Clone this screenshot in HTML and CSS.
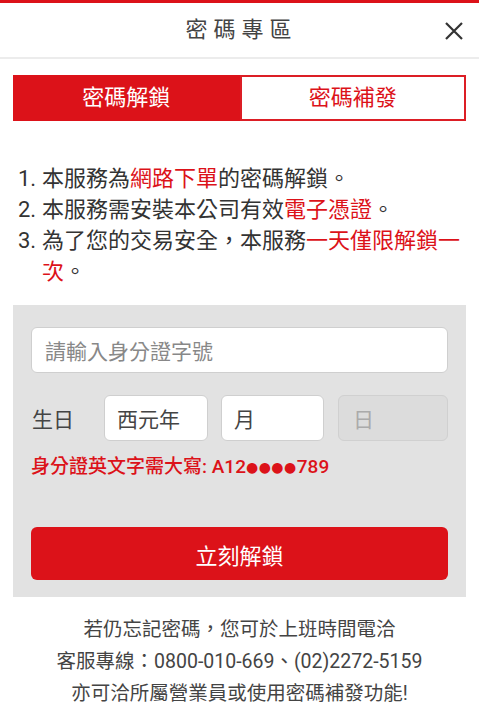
FILE: index.html
```html
<!DOCTYPE html>
<html lang="zh-Hant">
<head>
<meta charset="utf-8">
<link rel="stylesheet" href="styles.css">
</head>
<body>
<div class="topbar"></div>
<header class="header">
  <h1 class="title">密碼專區</h1>
  <button class="close" aria-label="close">
    <svg width="18" height="18" viewBox="0 0 18 18"><path d="M1 1 L17 17 M17 1 L1 17" stroke="#333" stroke-width="2.2" fill="none"/></svg>
  </button>
</header>
<main class="content">
  <div class="tabs">
    <div class="tab active">密碼解鎖</div>
    <div class="tab">密碼補發</div>
  </div>
  <ol class="notes">
    <li><span class="num">1.</span><span class="txt">本服務為<em>網路下單</em>的密碼解鎖。</span></li>
    <li><span class="num">2.</span><span class="txt">本服務需安裝本公司有效<em>電子憑證</em>。</span></li>
    <li><span class="num">3.</span><span class="txt">為了您的交易安全，本服務<em>一天僅限解鎖一次</em>。</span></li>
  </ol>
  <section class="panel">
    <div class="field">請輸入身分證字號</div>
    <div class="birth">
      <span class="label">生日</span>
      <div class="box year">西元年</div>
      <div class="box month">月</div>
      <div class="box day disabled">日</div>
    </div>
    <p class="hint">身分證英文字需大寫: A12<span class="dots">●●●●</span>789</p>
    <button class="submit">立刻解鎖</button>
  </section>
  <footer class="footer">
    <p>若仍忘記密碼，您可於上班時間電洽</p>
    <p>客服專線：0800-010-669、(02)2272-5159</p>
    <p>亦可洽所屬營業員或使用密碼補發功能!</p>
  </footer>
</main>
</body>
</html>
```
FILE: styles.css
```css
* { box-sizing: border-box; }
html, body { margin: 0; padding: 0; background: #fff; }
body {
  width: 479px;
  font-family: Roboto, "Noto Sans CJK TC", "Noto Sans", sans-serif;
  color: #333;
}
.topbar { height: 3px; background: #dc1219; }
.header {
  position: relative;
  height: 56px;
  display: flex;
  align-items: center;
  justify-content: center;
  border-bottom: 2px solid #ececec;
}
.title {
  margin: 0;
  font-size: 22px;
  font-weight: 400;
  letter-spacing: 6px;
  padding-left: 4px;
  color: #444;
  line-height: 1;
}
.close {
  position: absolute;
  right: 16px;
  top: 19px;
  width: 18px;
  height: 18px;
  padding: 0;
  border: 0;
  background: none;
  display: flex;
}
.content { padding: 16px 13px 0; }
.tabs {
  display: flex;
  height: 46px;
}
.tab {
  flex: 1;
  display: flex;
  align-items: center;
  justify-content: center;
  font-size: 22px;
  color: #dc1219;
  border: 2px solid #dc1e25;
  background: #fff;
  line-height: 1;
}
.tab.active { background: #dc1219; color: #fff; border-color: #dc1219; }
.notes {
  list-style: none;
  margin: 42px 0 0;
  padding: 0 0 0 5px;
  font-size: 22px;
  line-height: 31px;
  color: #333;
}
.notes li { display: flex; }
.num { width: 24px; flex: none; }
.txt { flex: 1; }
.notes em { font-style: normal; color: #dc1219; }
.panel {
  margin-top: 18px;
  background: #e2e2e2;
  padding: 22px 18px 17px;
}
.field {
  height: 46px;
  background: #fff;
  border: 1.5px solid #cfcfcf;
  border-radius: 6px;
  display: flex;
  align-items: center;
  padding-left: 13px;
  font-size: 21px;
  color: #888;
}
.birth {
  margin-top: 22px;
  display: flex;
  align-items: center;
  height: 46px;
}
.label { width: 73px; font-size: 21px; color: #444; padding-left: 1px; }
.box {
  height: 46px;
  background: #fff;
  border: 1.5px solid #cfcfcf;
  border-radius: 6px;
  display: flex;
  align-items: center;
  padding-left: 12px;
  font-size: 21px;
  color: #444;
}
.year { width: 104px; }
.month { width: 103px; margin-left: 13px; }
.day { width: 110px; margin-left: 14px; padding-left: 14px; }
.disabled { background: #dcdcdc; color: #aaa; border-color: #d0d0d0; }
.hint {
  margin: 13px 0 0;
  line-height: 26px;
  font-size: 19px;
  font-weight: 500;
  color: #dc1219;
}
.dots {
  font-family: "DejaVu Sans", sans-serif;
  font-size: 14px;
  letter-spacing: 0.5px;
  vertical-align: 1px;
}
.submit {
  display: flex;
  align-items: center;
  justify-content: center;
  width: 100%;
  height: 53px;
  margin-top: 47px;
  border: 0;
  border-radius: 6px;
  background: #dc1219;
  color: #fff;
  font-family: inherit;
  font-size: 22px;
}
.footer {
  margin-top: 17px;
  text-align: center;
  font-size: 19.5px;
  line-height: 32px;
  color: #444;
}
.footer p { margin: 0; }
```
